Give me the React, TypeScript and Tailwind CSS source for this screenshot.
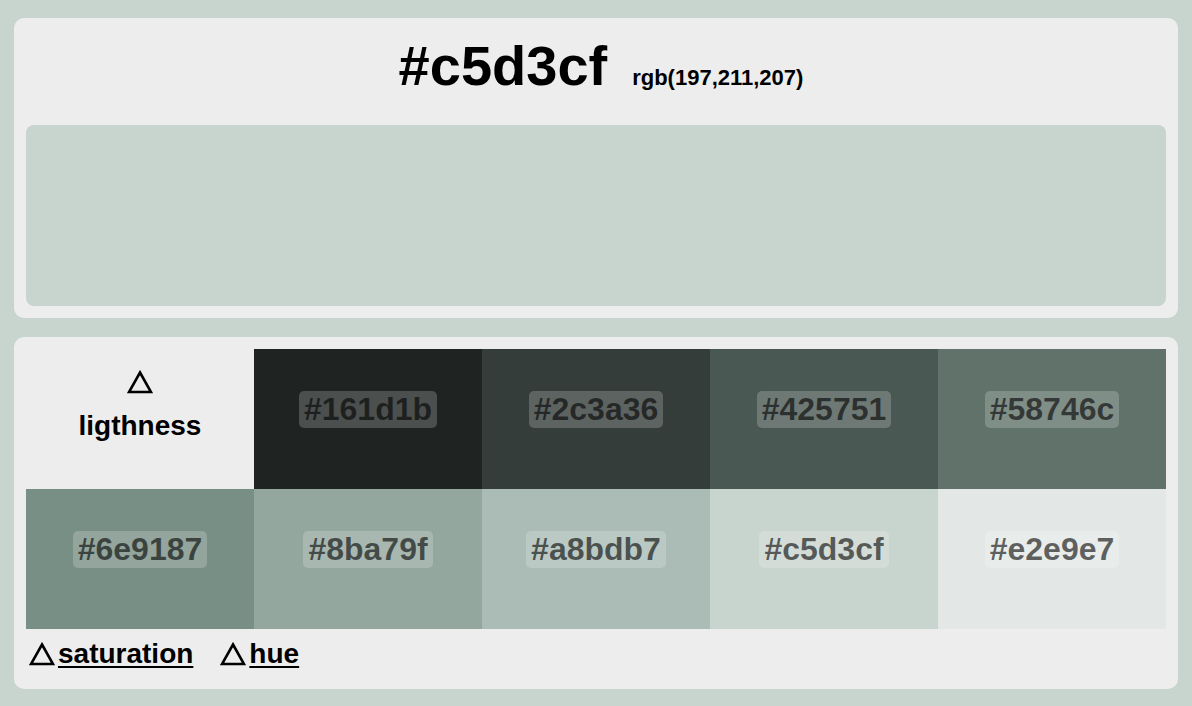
import React from 'react';

const shades = [
    { hex: '161d1b', bg: 'bg-[#1f2322]' },
    { hex: '2c3a36', bg: 'bg-[#343d3a]' },
    { hex: '425751', bg: 'bg-[#4a5853]' },
    { hex: '58746c', bg: 'bg-[#61726b]' },
    { hex: '6e9187', bg: 'bg-[#788f85]' },
    { hex: '8ba79f', bg: 'bg-[#93a79e]' },
    { hex: 'a8bdb7', bg: 'bg-[#abbcb6]' },
    { hex: 'c5d3cf', bg: 'bg-[#c8d4ce]' },
    { hex: 'e2e9e7', bg: 'bg-[#e3e8e7]' },
];

const Triangle: React.FC<{ className?: string }> = ({ className }) => (
    <svg viewBox="0 0 26 24" className={className} fill="none" stroke="currentColor" strokeWidth="2.6" strokeLinejoin="miter">
        <path d="M13 2.5 L24 22 L2 22 Z" />
    </svg>
);

export default function App() {
    return (
        <div className="min-h-[706px] w-full bg-[#c8d4ce] px-[14px] pt-[18px] pb-[17px] font-['Liberation_Sans',Arial,sans-serif] text-black">
            <div className="rounded-[10px] bg-[#ededed] px-3 pb-3">
                <div className="flex h-[107px] items-baseline justify-center pt-[20px] pl-[10px]">
                    <h1 className="text-[56px] font-bold leading-[56px]">#c5d3cf</h1>
                    <span className="ml-[25px] text-[22px] font-bold leading-none">rgb(197,211,207)</span>
                </div>
                <div className="h-[181px] rounded-[8px] bg-[#c8d4ce]" />
            </div>

            <div className="mt-[19px] rounded-[10px] bg-[#ededed] px-3 pt-3 pb-[19px]">
                <div className="grid grid-cols-5">
                    <div className="flex h-[140px] flex-col items-center justify-start pt-[21px]">
                        <Triangle className="h-[24px] w-[26px]" />
                        <span className="mt-[16px] text-[28px] font-bold leading-[32px]">ligthness</span>
                    </div>
                    {shades.map((s) => (
                        <div key={s.hex} className={`flex h-[140px] items-center justify-center pb-[19px] ${s.bg}`}>
                            <span className="rounded-[5px] bg-white/20 px-[5px] text-[32px] font-bold leading-[37px] text-black/60">
                                #{s.hex}
                            </span>
                        </div>
                    ))}
                </div>
                <div className="mt-[9px] flex items-center gap-[27px] pl-[3px]">
                    <a href="#" className="flex items-center">
                        <Triangle className="h-[24px] w-[26px]" />
                        <span className="ml-[3px] text-[28px] font-bold leading-[32px] underline decoration-[2px] underline-offset-[3px]">saturation</span>
                    </a>
                    <a href="#" className="flex items-center">
                        <Triangle className="h-[24px] w-[26px]" />
                        <span className="ml-[3px] text-[28px] font-bold leading-[32px] underline decoration-[2px] underline-offset-[3px]">hue</span>
                    </a>
                </div>
            </div>
        </div>
    );
}
